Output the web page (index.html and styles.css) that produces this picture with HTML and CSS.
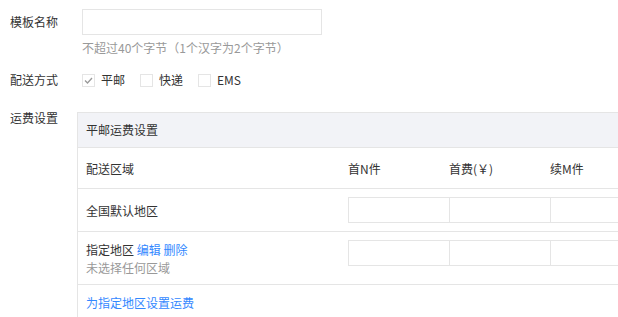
FILE: index.html
```html
<!DOCTYPE html>
<html lang="zh-CN">
<head>
    <meta charset="UTF-8">
    <title>运费模板</title>
    <link rel="stylesheet" href="styles.css">
</head>
<body>
    <form class="tpl-form">
        <div class="form-row">
            <label class="form-label">模板名称</label>
            <div class="form-control">
                <input type="text" class="name-input">
                <p class="hint">不超过40个字节（1个汉字为2个字节）</p>
            </div>
        </div>

        <div class="form-row row-check">
            <label class="form-label">配送方式</label>
            <div class="form-control checks">
                <span class="check">
                    <span class="box">
                        <svg width="11" height="11" viewBox="0 0 11 11"><polyline points="2,5.5 4.5,8 9,3" fill="none" stroke="#999" stroke-width="1.3"/></svg>
                    </span>平邮
                </span>
                <span class="check"><span class="box"></span>快递</span>
                <span class="check"><span class="box"></span>EMS</span>
            </div>
        </div>

        <div class="form-row row-fee">
            <label class="form-label fee-label">运费设置</label>
            <div class="fee-box">
                <div class="fee-title">平邮运费设置</div>
                <div class="fee-row fee-head">
                    <div class="cell-area">配送区域</div>
                    <div>首N件</div>
                    <div>首费(￥)</div>
                    <div>续M件</div>
                </div>
                <div class="fee-row fee-default">
                    <div class="cell-area">全国默认地区</div>
                    <div><input type="text"></div>
                    <div><input type="text"></div>
                    <div><input type="text"></div>
                </div>
                <div class="fee-row fee-custom">
                    <div class="cell-area">
                        指定地区 <a href="#">编辑</a> <a href="#">删除</a>
                        <div class="muted">未选择任何区域</div>
                    </div>
                    <div><input type="text"></div>
                    <div><input type="text"></div>
                    <div><input type="text"></div>
                </div>
                <div class="fee-add"><a href="#">为指定地区设置运费</a></div>
            </div>
        </div>
    </form>
</body>
</html>
```

FILE: styles.css
```css
html, body {
    overflow: hidden;
}
body {
    margin: 0;
    padding-top: 9px;
    font-family: "Noto Sans CJK SC", "Liberation Sans", sans-serif;
    font-size: 12px;
    color: #333;
}
a {
    color: #38f;
    text-decoration: none;
}
.form-row {
    display: flex;
}
.form-label {
    width: 72px;
    flex-shrink: 0;
    padding-left: 10px;
    line-height: 26px;
}
.name-input {
    display: block;
    box-sizing: border-box;
    width: 240px;
    height: 26px;
    margin: 0;
    border: 1px solid #e5e5e5;
    outline: none;
}
.hint {
    margin: 4px 0 0;
    line-height: 18px;
    color: #999;
}
.row-check {
    margin-top: 14px;
}
.row-check .form-label {
    line-height: 18px;
}
.checks {
    display: flex;
    align-items: center;
    line-height: 18px;
}
.check {
    display: flex;
    align-items: center;
    margin-right: 15px;
}
.box {
    box-sizing: border-box;
    width: 13px;
    height: 13px;
    margin-right: 6px;
    border: 1px solid #e5e5e5;
    display: flex;
    align-items: center;
    justify-content: center;
}
.row-fee {
    margin-top: 23px;
}
.fee-label {
    width: 62px;
    padding-left: 10px;
    margin-right: 5px;
    line-height: 12px;
}
.fee-box {
    flex-shrink: 0;
    width: 800px;
    border: 1px solid #e5e5e5;
}
.fee-title {
    height: 34px;
    line-height: 34px;
    padding-left: 8px;
    background: #f2f3f7;
    border-bottom: 1px solid #e5e5e5;
}
.fee-row {
    display: grid;
    grid-template-columns: 270px repeat(3, 101px);
    border-bottom: 1px solid #e5e5e5;
}
.cell-area {
    padding-left: 8px;
}
.fee-head {
    height: 40px;
    align-items: center;
}
.fee-default {
    height: 42px;
    align-items: center;
}
.fee-custom {
    height: 52px;
    align-items: start;
}
.fee-custom .cell-area {
    padding-top: 9px;
    line-height: 18px;
}
.fee-custom > div > input {
    margin-top: 8px;
}
.fee-row input {
    display: block;
    box-sizing: border-box;
    width: 102px;
    height: 26px;
    margin: 0;
    border: 1px solid #e5e5e5;
    outline: none;
}
.muted {
    color: #999;
}
.fee-add {
    padding: 9px 8px;
    line-height: 18px;
}
```
